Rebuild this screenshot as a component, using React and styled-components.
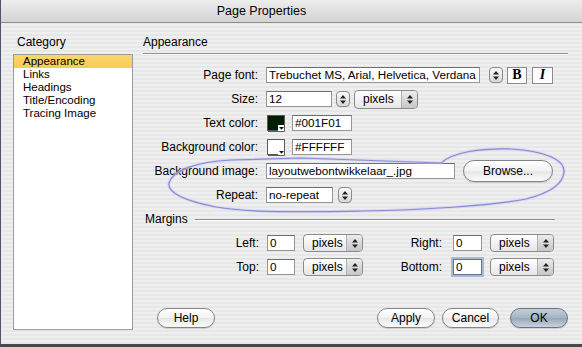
import React from 'react'
import styled, { createGlobalStyle } from 'styled-components'

const GlobalStyle = createGlobalStyle`
  body {
    margin: 0;
    overflow: hidden;
  }
`

const Window = styled.div`
  position: relative;
  width: 582px;
  height: 347px;
  box-sizing: border-box;
  display: flex;
  flex-direction: column;
  background: repeating-linear-gradient(to bottom, #efefef 0 2px, #e7e7e7 2px 4px);
  border-left: 1px solid #4c5670;
  border-bottom: 3px solid #4a4a4a;
  font-family: "Liberation Sans", Arial, sans-serif;
  font-size: 12px;
  color: #000;
`

const TitleBar = styled.div`
  height: 23px;
  box-sizing: border-box;
  display: flex;
  align-items: center;
  justify-content: center;
  padding-right: 60px;
  background: linear-gradient(#ededed, #d3d3d3);
  border-bottom: 1px solid #8c8c8c;
  font-size: 12.5px;
`

const Body = styled.div`
  flex: 1;
  display: flex;
  min-height: 0;
`

const Sidebar = styled.div`
  width: 120px;
  margin-left: 12px;
  display: flex;
  flex-direction: column;
  padding-bottom: 14px;
`

const PaneTitle = styled.div`
  height: 31px;
  box-sizing: border-box;
  display: flex;
  align-items: flex-end;
  padding: 0 0 5px 4px;
`

const ListBox = styled.div`
  flex: 1;
  background: #fff;
  border: 1px solid #9c9c9c;
  font-size: 11.5px;
`

const ListItem = styled.div`
  height: 13px;
  line-height: 13px;
  padding-left: 9px;
  background: ${p => (p.$selected ? 'linear-gradient(#fcd76c, #f8cb55)' : 'transparent')};
`

const Main = styled.div`
  flex: 1;
  display: flex;
  flex-direction: column;
  margin-left: 10px;
  padding: 0 14px 16px 0;
`

const SectionHeader = styled.div`
  height: 31px;
  box-sizing: border-box;
  display: flex;
  align-items: flex-end;
  padding-bottom: 4px;
  border-bottom: 1px solid #8e8e8e;
  box-shadow: 0 1px 0 #fafafa;
`

const Form = styled.div`
  padding-top: 9px;
  display: flex;
  flex-direction: column;
`

const Row = styled.div`
  height: 24px;
  display: flex;
  align-items: center;
  gap: 8px;
`

const Label = styled.div`
  width: ${p => p.$w || 115}px;
  flex-shrink: 0;
  text-align: right;
  white-space: nowrap;
  padding-right: ${p => p.$pad || 0}px;
  box-sizing: border-box;
`

const Fields = styled.div`
  display: flex;
  align-items: center;
  gap: ${p => p.$gap}px;
`

const TextBox = styled.div`
  width: ${p => p.$w}px;
  height: 16px;
  box-sizing: border-box;
  background: #fff;
  border: 1px solid ${p => (p.$focus ? '#5f7694' : '#969696')};
  border-top-color: ${p => (p.$focus ? '#5f7694' : '#6e6e6e')};
  box-shadow: ${p => (p.$focus ? '0 0 0 2px #a9b8cc' : 'none')};
  padding: 0 2px;
  font-size: 11.7px;
  line-height: 14px;
  white-space: nowrap;
  overflow: hidden;
`

const StepperBox = styled.div`
  width: 14px;
  height: 16px;
  box-sizing: border-box;
  border: 1px solid #8a8a8a;
  border-radius: 4px;
  background: linear-gradient(#fbfbfb, #d6d6d6);
  display: flex;
  align-items: center;
  justify-content: center;
`

const Arrows = () => (
  <svg width="6" height="9" viewBox="0 0 6 9">
    <path d="M3 0 L6 3.4 H0 Z M3 9 L0 5.6 H6 Z" fill="#222" />
  </svg>
)

const Stepper = () => (
  <StepperBox>
    <Arrows />
  </StepperBox>
)

const PopupBox = styled.div`
  width: ${p => p.$w}px;
  height: ${p => p.$h || 18}px;
  box-sizing: border-box;
  display: flex;
  border: 1px solid #8a8a8a;
  border-radius: 4px;
  overflow: hidden;
  background: linear-gradient(#ffffff, #e6e6e6);
`

const PopupText = styled.div`
  flex: 1;
  display: flex;
  align-items: center;
  padding-left: 8px;
`

const PopupCap = styled.div`
  width: 15px;
  border-left: 1px solid #b0b0b0;
  background: linear-gradient(#ececec, #c6c6c6);
  display: flex;
  align-items: center;
  justify-content: center;
`

const Popup = ({ w, h, children }) => (
  <PopupBox $w={w} $h={h}>
    <PopupText>{children}</PopupText>
    <PopupCap>
      <Arrows />
    </PopupCap>
  </PopupBox>
)

const StyleButton = styled.div`
  width: ${p => p.$w}px;
  height: 17px;
  box-sizing: border-box;
  border: 1px solid #8c8c8c;
  background: #fdfdfd;
  display: flex;
  align-items: center;
  justify-content: center;
  font-family: "Liberation Serif", "Times New Roman", serif;
  font-weight: bold;
  font-style: ${p => (p.$italic ? 'italic' : 'normal')};
  font-size: 14px;
`

const Swatch = ({ color }) => (
  <svg width="19" height="17" viewBox="0 0 19 17" style={{ marginLeft: 1 }}>
    <rect x="0.5" y="0.5" width="17" height="15" fill={color} stroke="#5a5a5a" />
    <rect x="11" y="10" width="7" height="6" fill="#fff" />
    <path d="M17.5 10 V16.5 H1" fill="none" stroke="#5a5a5a" />
    <path d="M12 12 H17 L14.5 14.8 Z" fill="#111" />
  </svg>
)

const PillButton = styled.div`
  width: ${p => p.$w}px;
  height: ${p => p.$h || 20}px;
  box-sizing: border-box;
  border-radius: 11px;
  border: 1px solid ${p => (p.$primary ? '#66768a' : '#858585')};
  background: ${p =>
    p.$primary
      ? 'linear-gradient(#c4ced9, #a4b2c2 50%, #97a7b9 51%, #c8d2dd)'
      : 'linear-gradient(#ffffff, #f2f2f2 50%, #e6e6e6 51%, #fbfbfb)'};
  box-shadow: 0 1px 1px rgba(0, 0, 0, 0.15);
  display: flex;
  align-items: center;
  justify-content: center;
  margin-left: ${p => p.$ml || 0}px;
`

const MarginsHeader = styled.div`
  height: 24px;
  display: flex;
  align-items: center;
  gap: 7px;
  padding-left: 2px;
  margin-right: 13px;
`

const Rule = styled.div`
  flex: 1;
  height: 1px;
  background: #8e8e8e;
  box-shadow: 0 1px 0 #fafafa;
`

const MarginGrid = styled.div`
  display: grid;
  grid-template-columns: 116px 28px 60px 74px 29px 64px;
  grid-auto-rows: 24px;
  column-gap: 8px;
  align-items: center;
`

const Footer = styled.div`
  margin-top: auto;
  display: flex;
  align-items: center;
  padding-left: 14px;
`

const ButtonGroup = styled.div`
  margin-left: auto;
  display: flex;
  gap: 7px;
`

const Overlay = styled.svg`
  position: absolute;
  left: 0;
  top: 0;
  pointer-events: none;
`

const categories = ['Appearance', 'Links', 'Headings', 'Title/Encoding', 'Tracing Image']

const loop =
  'M168 183 C172 170 195 162 230 160 L300 158 L440 163 C452 152 480 148 510 149 C545 151 564 160 563 172 C562 186 545 194 525 199 C490 206 420 210 360 211 C300 212 250 213 215 207 C185 201 166 193 168 183 Z'

export default function App() {
  return (
    <>
      <GlobalStyle />
      <Window>
        <TitleBar>Page Properties</TitleBar>
        <Body>
          <Sidebar>
            <PaneTitle>Category</PaneTitle>
            <ListBox>
              {categories.map((c, i) => (
                <ListItem key={c} $selected={i === 0}>{c}</ListItem>
              ))}
            </ListBox>
          </Sidebar>

          <Main>
            <SectionHeader>Appearance</SectionHeader>
            <Form>
              <Row>
                <Label>Page font:</Label>
                <Fields $gap={9}>
                  <TextBox $w={214}>Trebuchet MS, Arial, Helvetica, Verdana</TextBox>
                  <Fields $gap={4}>
                    <Stepper />
                    <Fields $gap={5}>
                      <StyleButton $w={20}>B</StyleButton>
                      <StyleButton $w={21} $italic>I</StyleButton>
                    </Fields>
                  </Fields>
                </Fields>
              </Row>
              <Row>
                <Label>Size:</Label>
                <Fields $gap={4}>
                  <TextBox $w={66}>12</TextBox>
                  <Stepper />
                  <Popup w={64} h={19}>pixels</Popup>
                </Fields>
              </Row>
              <Row>
                <Label>Text color:</Label>
                <Fields $gap={6}>
                  <Swatch color="#001F01" />
                  <TextBox $w={60}>#001F01</TextBox>
                </Fields>
              </Row>
              <Row>
                <Label>Background color:</Label>
                <Fields $gap={6}>
                  <Swatch color="#FFFFFF" />
                  <TextBox $w={60}>#FFFFFF</TextBox>
                </Fields>
              </Row>
              <Row>
                <Label>Background image:</Label>
                <Fields $gap={8}>
                  <TextBox $w={189}>layoutwebontwikkelaar_.jpg</TextBox>
                  <PillButton $w={90} $h={22}>Browse...</PillButton>
                </Fields>
              </Row>
              <Row>
                <Label>Repeat:</Label>
                <Fields $gap={5}>
                  <TextBox $w={67}>no-repeat</TextBox>
                  <Stepper />
                </Fields>
              </Row>
            </Form>

            <MarginsHeader>
              Margins
              <Rule />
            </MarginsHeader>
            <MarginGrid>
              <Label $w={116}>Left:</Label>
              <TextBox $w={28}>0</TextBox>
              <Popup w={60}>pixels</Popup>
              <Label $w={74} $pad={3}>Right:</Label>
              <TextBox $w={29}>0</TextBox>
              <Popup w={64}>pixels</Popup>
              <Label $w={116}>Top:</Label>
              <TextBox $w={28}>0</TextBox>
              <Popup w={60}>pixels</Popup>
              <Label $w={74} $pad={3}>Bottom:</Label>
              <TextBox $w={29} $focus>0</TextBox>
              <Popup w={64}>pixels</Popup>
            </MarginGrid>

            <Footer>
              <PillButton $w={58}>Help</PillButton>
              <ButtonGroup>
                <PillButton $w={58}>Apply</PillButton>
                <PillButton $w={57}>Cancel</PillButton>
                <PillButton $w={58} $ml={4} $primary>OK</PillButton>
              </ButtonGroup>
            </Footer>
          </Main>
        </Body>

        <Overlay width="582" height="347" viewBox="0 0 582 347">
          <path d={loop} fill="none" stroke="#c8c8f0" strokeWidth="3" opacity="0.6" />
          <path d={loop} fill="none" stroke="#8a8ad8" strokeWidth="1.2" />
        </Overlay>
      </Window>
    </>
  )
}
